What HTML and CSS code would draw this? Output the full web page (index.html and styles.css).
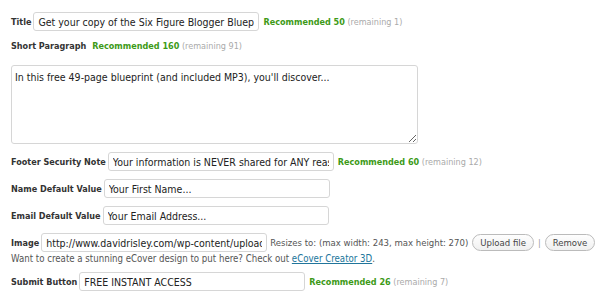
FILE: index.html
```html
<!DOCTYPE html>
<html lang="en">
<head>
    <meta charset="UTF-8">
    <title>Opt-in Settings</title>
    <link rel="stylesheet" href="styles.css">
</head>
<body>

<div class="settings">
    <div class="row">
        <label for="title">Title</label>
        <input type="text" id="title" value="Get your copy of the Six Figure Blogger Blueprint">
        <span class="hint"><b>Recommended 50</b> (remaining 1)</span>
    </div>

    <div class="row row-text">
        <label>Short Paragraph</label>
        <span class="hint"><b>Recommended 160</b> (remaining 91)</span>
    </div>
    <textarea id="paragraph">In this free 49-page blueprint (and included MP3), you'll discover...</textarea>

    <div class="row">
        <label for="footer-note">Footer Security Note</label>
        <input type="text" id="footer-note" value="Your information is NEVER shared for ANY reason.">
        <span class="hint"><b>Recommended 60</b> (remaining 12)</span>
    </div>

    <div class="row">
        <label for="name-default">Name Default Value</label>
        <input type="text" id="name-default" value="Your First Name...">
    </div>

    <div class="row">
        <label for="email-default">Email Default Value</label>
        <input type="text" id="email-default" value="Your Email Address...">
    </div>

    <div class="row">
        <label for="image">Image</label>
        <input type="text" id="image" value="http://www.davidrisley.com/wp-content/uploads/ecover.png">
        <span class="resize">Resizes to: (max width: 243, max height: 270)</span>
        <button type="button">Upload file</button>
        <span class="sep">|</span>
        <button type="button">Remove</button>
    </div>
    <p class="note">Want to create a stunning eCover design to put here? Check out <a href="#">eCover Creator 3D</a>.</p>

    <div class="row">
        <label for="submit-text">Submit Button</label>
        <input type="text" id="submit-text" value="FREE INSTANT ACCESS">
        <span class="hint"><b>Recommended 26</b> (remaining 7)</span>
    </div>
</div>

</body>
</html>
```

FILE: styles.css
```css
body {
    margin: 0;
    font-family: "DejaVu Sans Condensed", "DejaVu Sans", sans-serif;
    color: #333;
    background: #fff;
}
.settings {
    padding: 12px 0 0 11px;
}
.row {
    display: flex;
    align-items: center;
    height: 19px;
    margin: 0 0 8px;
    white-space: nowrap;
}
.row > * {
    flex-shrink: 0;
}
.row-text {
    height: 13px;
    margin-bottom: 13px;
}
label {
    font-size: 9px;
    font-weight: bold;
    color: #333;
    margin-right: 2px;
}
input[type="text"] {
    box-sizing: border-box;
    width: 226px;
    height: 19px;
    margin: 0;
    padding: 0 4px;
    border: 1px solid #d6d6d6;
    border-radius: 3px;
    font-family: "DejaVu Sans Condensed", "DejaVu Sans", sans-serif;
    font-size: 10.5px;
    color: #222;
}
.hint {
    font-size: 9px;
    color: #aaa;
    margin-left: 4px;
}
.hint b {
    color: #3d9a17;
}
textarea {
    display: block;
    box-sizing: border-box;
    width: 407px;
    height: 79px;
    margin: 0 0 8px;
    padding: 5px 3px;
    border: 1px solid #d6d6d6;
    border-radius: 3px;
    font-family: "DejaVu Sans Condensed", "DejaVu Sans", sans-serif;
    font-size: 10.5px;
    color: #222;
    resize: vertical;
}
.resize {
    font-size: 9.5px;
    color: #555;
    margin-left: 3px;
}
button {
    height: 17px;
    padding: 0 7px;
    margin: 0 0 0 4px;
    border: 1px solid #bbb;
    border-radius: 9px;
    background: linear-gradient(#fefefe, #f0f0f0);
    font-family: "DejaVu Sans Condensed", "DejaVu Sans", sans-serif;
    font-size: 9.5px;
    color: #464646;
}
.sep {
    font-size: 9px;
    color: #999;
    margin-left: 4px;
}
.note {
    font-size: 9.6px;
    color: #555;
    margin: -8px 0 7px;
    line-height: 13px;
}
.note a {
    color: #21759b;
}
```
